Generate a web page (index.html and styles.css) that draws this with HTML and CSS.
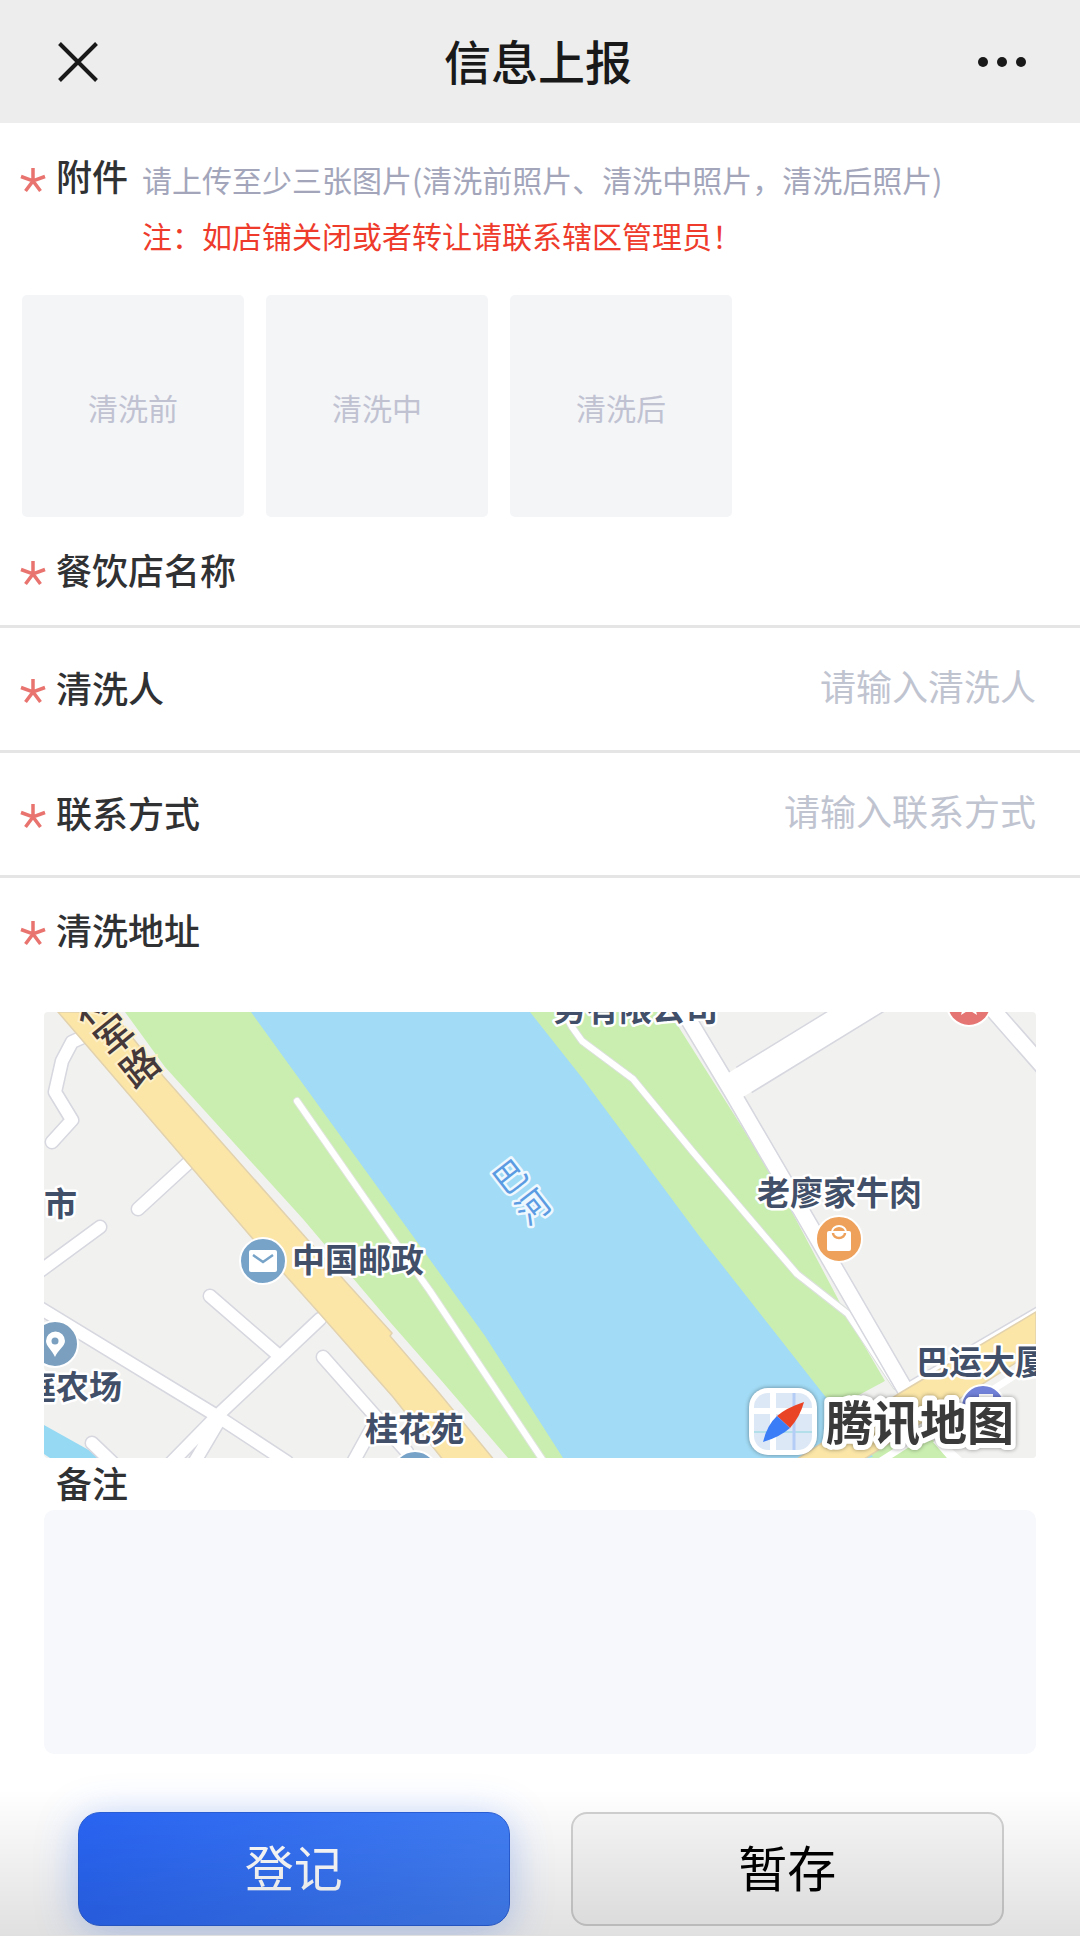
FILE: index.html
```
<!DOCTYPE html>
<html lang="zh-CN">
<head>
  <meta charset="UTF-8">
  <meta name="viewport" content="width=device-width, initial-scale=1.0">
  <title>信息上报</title>
  <link rel="stylesheet" href="styles.css">
</head>
<body>
  <svg class="defs" aria-hidden="true">
    <symbol id="star" viewBox="0 0 26 26">
      <path d="M13 1V14M1 9.5L13 14L25 9.5M5.5 24L13 14L20.5 24" fill="none" stroke="#e9746f" stroke-width="3.5"/>
    </symbol>
  </svg>

  <header class="navbar">
    <button class="nav-btn" type="button" aria-label="关闭">
      <svg width="40" height="40" viewBox="0 0 40 40"><path d="M1.5 1.5L38.5 38.5M38.5 1.5L1.5 38.5" stroke="#191919" stroke-width="4"/></svg>
    </button>
    <h1>信息上报</h1>
    <button class="nav-btn" type="button" aria-label="更多">
      <svg width="50" height="12" viewBox="0 0 50 12" fill="#191919"><circle cx="6" cy="6" r="5"/><circle cx="25" cy="6" r="5"/><circle cx="44" cy="6" r="5"/></svg>
    </button>
  </header>

  <form>
    <section class="attach">
      <div class="attach-head">
        <svg class="star"><use href="#star"/></svg>
        <h2 class="label">附件</h2>
        <div class="tips">
          <p class="hint">请上传至少三张图片(清洗前照片、清洗中照片，清洗后照片)</p>
          <p class="warn">注：如店铺关闭或者转让请联系辖区管理员！</p>
        </div>
      </div>
      <div class="photos">
        <button class="photo" type="button">清洗前</button>
        <button class="photo" type="button">清洗中</button>
        <button class="photo" type="button">清洗后</button>
      </div>
    </section>

    <div class="row shop">
      <svg class="star"><use href="#star"/></svg>
      <label class="label" for="shop">餐饮店名称</label>
      <input id="shop" type="text">
    </div>
    <div class="row">
      <svg class="star"><use href="#star"/></svg>
      <label class="label" for="cleaner">清洗人</label>
      <input id="cleaner" type="text" placeholder="请输入清洗人">
    </div>
    <div class="row">
      <svg class="star"><use href="#star"/></svg>
      <label class="label" for="phone">联系方式</label>
      <input id="phone" type="tel" placeholder="请输入联系方式">
    </div>
    <div class="row address">
      <svg class="star"><use href="#star"/></svg>
      <h2 class="label">清洗地址</h2>
    </div>

    <svg class="map" viewBox="0 0 992 446" role="img" aria-label="地图">
      <rect width="992" height="446" fill="#f1f1f0"/>

      <!-- river and banks -->
      <path d="M81 0L121 55L259 207L346 310L396 367L464 446H903L889 429L824 386L841 369L803 304L729 164L634 14L624 0Z" fill="#caeeb0"/>
      <path d="M207 0L371 227L441 324L519 446H830L773 374L656 225L539 67L486 0Z" fill="#a2dbf5"/>
      <path d="M0 413L59 446H6L0 442Z" fill="#96d9f3"/>
      <path d="M841 369L800 391V420L889 429L903 446H992V330Z" fill="#f1f1f0"/>
      <path d="M824 446L889 428L903 446Z" fill="#caeeb0"/>

      <!-- side streets: outline first, then the white fill -->
      <g fill="none" stroke-linecap="round" stroke-linejoin="round">
        <path d="M39 25L28 30L18 49L11 80L28 108L8 130M143 152L94 197M56 215L-4 259M-14 290L173 404L243 450M166 284L233 342M276 307L173 404L124 454M176 407L147 456M279 345L363 440M329 414L307 454M48 431L72 454" stroke="#d6d7df" stroke-width="15"/>
        <path d="M39 25L28 30L18 49L11 80L28 108L8 130M143 152L94 197M56 215L-4 259M-14 290L173 404L243 450M166 284L233 342M276 307L173 404L124 454M176 407L147 456M279 345L363 440M329 414L307 454M48 431L72 454" stroke="#fff" stroke-width="12"/>

        <path d="M253 89L349 227L386 279L504 456" stroke="#dfe4dc" stroke-width="8"/>
        <path d="M253 89L349 227L386 279L504 456" stroke="#fff" stroke-width="6"/>
        <path d="M520 0L528 15L538 29L589 67L649 140L706 207L753 262L804 302L836 350L852 374" stroke="#dbe0dc" stroke-width="8"/>
        <path d="M520 0L528 15L538 29L589 67L649 140L706 207L753 262L804 302L836 350L852 374" stroke="#fff" stroke-width="6"/>

        <g stroke="#d6d7df">
          <path d="M634 -10L688 80L768 217L862 379" stroke-width="18"/>
          <path d="M700 68L840 -18" stroke-width="31" stroke-linecap="butt"/>
          <path d="M943 -9L1001 57" stroke-width="18"/>
          <path d="M866 376L1000 298" stroke-width="14"/>
        </g>
        <g stroke="#fff">
          <path d="M634 -10L688 80L768 217L862 379" stroke-width="15"/>
          <path d="M690 74L840 -18" stroke-width="28" stroke-linecap="butt"/>
          <path d="M943 -9L1001 57" stroke-width="15"/>
          <path d="M866 376L1000 298" stroke-width="11"/>
        </g>
      </g>
      <path d="M835 446L992 346V354L848 446Z" fill="#fff"/>
      <path d="M903 446L889 430L896 426L918 446Z" fill="#fff"/>

      <!-- main roads -->
      <path d="M14 0L209 227L276 302L349 385L400 449H451L396 382L346 324L348 321L263 227L119 64L68 0Z" fill="#fbe6a8" stroke="#e2d2ad" stroke-width="1.5"/>
      <path d="M992 300L856 381L750 449H817L992 338Z" fill="#fbe6a8" stroke="#e2d2ad" stroke-width="1.5"/>

      <!-- points of interest -->
      <g stroke="#fff" stroke-width="2">
        <circle cx="219" cy="249" r="23" fill="#77a3c9"/>
        <circle cx="11" cy="332" r="23" fill="#7a9fbf"/>
        <circle cx="795" cy="227" r="23" fill="#eda15a"/>
        <circle cx="925" cy="-8" r="22" fill="#e57572"/>
        <circle cx="939" cy="395" r="22" fill="#7181d8"/>
        <circle cx="371" cy="462" r="23" fill="#77a3c9"/>
      </g>
      <rect x="205" y="238" width="28" height="22" rx="2" fill="#fff"/>
      <path d="M209 243L219 250L229 243" fill="none" stroke="#77a3c9" stroke-width="2.5"/>
      <path d="M11 345C8 338 2 334 2 329A9.5 9.5 0 0 1 21 329C21 334 14 338 11 345Z" fill="#fff"/>
      <circle cx="11" cy="329" r="3.5" fill="#7a9fbf"/>
      <rect x="783" y="219" width="24" height="20" rx="2" fill="#fff"/>
      <path d="M788 220A7 6 0 0 1 802 220" fill="none" stroke="#fff" stroke-width="2"/>
      <path d="M789 221A6 5 0 0 0 801 221" fill="none" stroke="#eda15a" stroke-width="2.5"/>
      <path d="M917 3L925 -2L933 3L930 -9H920Z" fill="#fff"/>
      <rect x="935" y="382" width="14" height="12" fill="#fff"/>

      <g class="map-label">
        <text x="248" y="260">中国邮政</text>
        <text x="0" y="204">市</text>
        <text x="-21" y="387">庭农场</text>
        <text x="321" y="429">桂花苑</text>
        <text x="713" y="193">老廖家牛肉</text>
        <text x="872" y="362">巴运大厦</text>
        <text x="509" y="9">务有限公司</text>
      </g>
      <g class="road-label">
        <text transform="translate(46 -7) rotate(-39)" y="14">将</text>
        <text transform="translate(71 24) rotate(-39)" y="14">军</text>
        <text transform="translate(96 55) rotate(-39)" y="14">路</text>
      </g>
      <g class="river-label">
        <text transform="translate(466 165) rotate(-38)" y="12">巴</text>
        <text transform="translate(489 195) rotate(-38)" y="12">河</text>
      </g>

      <g class="map-brand">
        <rect x="705" y="376" width="68" height="67" rx="19" fill="#fff"/>
        <rect x="710" y="381" width="58" height="57" rx="14" fill="#dde8f6"/>
        <path d="M710 399H768M729 381V438" stroke="#fff" stroke-width="6"/>
        <path d="M710 420H768" stroke="#b3dfea" stroke-width="2"/>
        <path d="M750 381V438" stroke="#b4cdf7" stroke-width="3"/>
        <path d="M760 390Q742 396 733 404L746 416Q756 405 760 390Z" fill="#ea4427"/>
        <path d="M719 430Q723 413 733 404L746 416Q736 425 719 430Z" fill="#3b7df6"/>
        <text x="782" y="428">腾讯地图</text>
      </g>
    </svg>

    <div class="remark">
      <label class="label" for="remark">备注</label>
      <textarea id="remark"></textarea>
    </div>

    <div class="actions">
      <button class="btn btn-primary" type="submit">登记</button>
      <button class="btn" type="button">暂存</button>
    </div>
  </form>
  <div class="bottom-fade"></div>
</body>
</html>
```
FILE: styles.css
```
* {
  box-sizing: border-box;
}
body {
  margin: 0;
  background: #fff;
  color: #303133;
  font-family: "Noto Sans CJK SC", sans-serif;
}
h1, h2, p {
  margin: 0;
}
button, input, textarea {
  font-family: inherit;
  border: none;
  outline: none;
}
.defs {
  display: block;
  width: 0;
  height: 0;
}
.navbar {
  display: flex;
  align-items: center;
  justify-content: space-between;
  height: 123px;
  padding: 0 52px;
  background: #ededed;
}
.navbar h1 {
  padding: 0 4px 4px 0;
  font-size: 47px;
  font-weight: 500;
  line-height: 64px;
  color: #191919;
}
.nav-btn {
  display: flex;
  align-items: center;
  justify-content: center;
  width: 52px;
  height: 52px;
  padding: 0;
  background: none;
}
.label {
  padding-bottom: 4px;
  font-size: 36px;
  font-weight: 500;
  line-height: 48px;
  white-space: nowrap;
}
.star {
  flex: none;
  width: 26px;
  height: 26px;
  margin: 4px 10px 0 0;
}

/* attachments */
.attach {
  padding: 28px 20px 0;
}
.attach-head {
  display: flex;
}
.attach-head .star {
  margin-top: 16px;
}
.tips {
  margin-left: 14px;
  font-size: 30px;
  line-height: 56px;
}
.hint {
  color: #a3a6bb;
}
.warn {
  color: #ee3b2b;
}
.photos {
  display: flex;
  gap: 22px;
  padding: 32px 2px 0;
}
.photo {
  width: 222px;
  height: 222px;
  padding: 2px 0 0;
  border-radius: 5px;
  background: #f4f5f7;
  color: #c0c2d2;
  font-size: 30px;
}

/* form rows */
.row {
  display: flex;
  align-items: center;
  height: 125px;
  padding: 0 44px 0 20px;
  border-bottom: 3px solid #e5e5e5;
}
.row.shop {
  height: 111px;
}
.row.address {
  height: 106px;
  border-bottom: none;
}
.row input {
  flex: 1;
  min-width: 0;
  height: 60px;
  padding: 0 0 8px;
  background: none;
  color: #303133;
  font-size: 36px;
  text-align: right;
}
.row input::placeholder {
  color: #c0c4d0;
}

/* map */
.map {
  display: block;
  width: calc(100% - 88px);
  margin: 28px 44px 0;
  border-radius: 4px;
}
.map-label {
  font-size: 33px;
  font-weight: 700;
  fill: #424f68;
  stroke: #fff;
  stroke-width: 5px;
  stroke-linejoin: round;
  paint-order: stroke;
}
.road-label {
  font-size: 38px;
  fill: #45383a;
  stroke: #fdf0c8;
  stroke-width: 4px;
  font-weight: 500;
  paint-order: stroke;
  text-anchor: middle;
}
.river-label {
  font-size: 33px;
  fill: #5b9be2;
  stroke: #eef8fe;
  stroke-width: 5px;
  stroke-linejoin: round;
  paint-order: stroke;
  text-anchor: middle;
}
.map-brand {
  filter: drop-shadow(0 0 2px rgba(0, 0, 0, 0.4));
}
.map-brand text {
  font-size: 47px;
  font-weight: 700;
  fill: #3a3a3a;
  stroke: #fff;
  stroke-width: 10px;
  stroke-linejoin: round;
  paint-order: stroke;
}

/* remark */
.remark {
  padding: 0 44px;
}
.remark .label {
  display: block;
  padding-left: 12px;
}
.remark textarea {
  display: block;
  width: 100%;
  height: 244px;
  padding: 16px;
  border-radius: 10px;
  background: #f7f8fc;
  font-size: 36px;
  resize: none;
}

/* bottom buttons */
.actions {
  display: flex;
  gap: 61px;
  padding: 58px 76px 9px 78px;
}
.btn {
  flex: 1;
  height: 114px;
  padding: 0 0 8px;
  border: 2px solid #d2d2d2;
  border-radius: 16px;
  background: #f8f8f8;
  color: #000;
  font-size: 49px;
}
.btn-primary {
  border: 1px solid #2a5fd8;
  border-radius: 22px;
  background: linear-gradient(100deg, #2a66f6, #4380f7);
  box-shadow: 0 6px 40px rgba(60, 120, 245, 0.35);
  color: #fff;
}
.bottom-fade {
  position: fixed;
  left: 0;
  right: 0;
  bottom: 0;
  height: 146px;
  background: linear-gradient(rgba(0, 0, 0, 0), rgba(0, 0, 0, 0.12));
  pointer-events: none;
}
```
